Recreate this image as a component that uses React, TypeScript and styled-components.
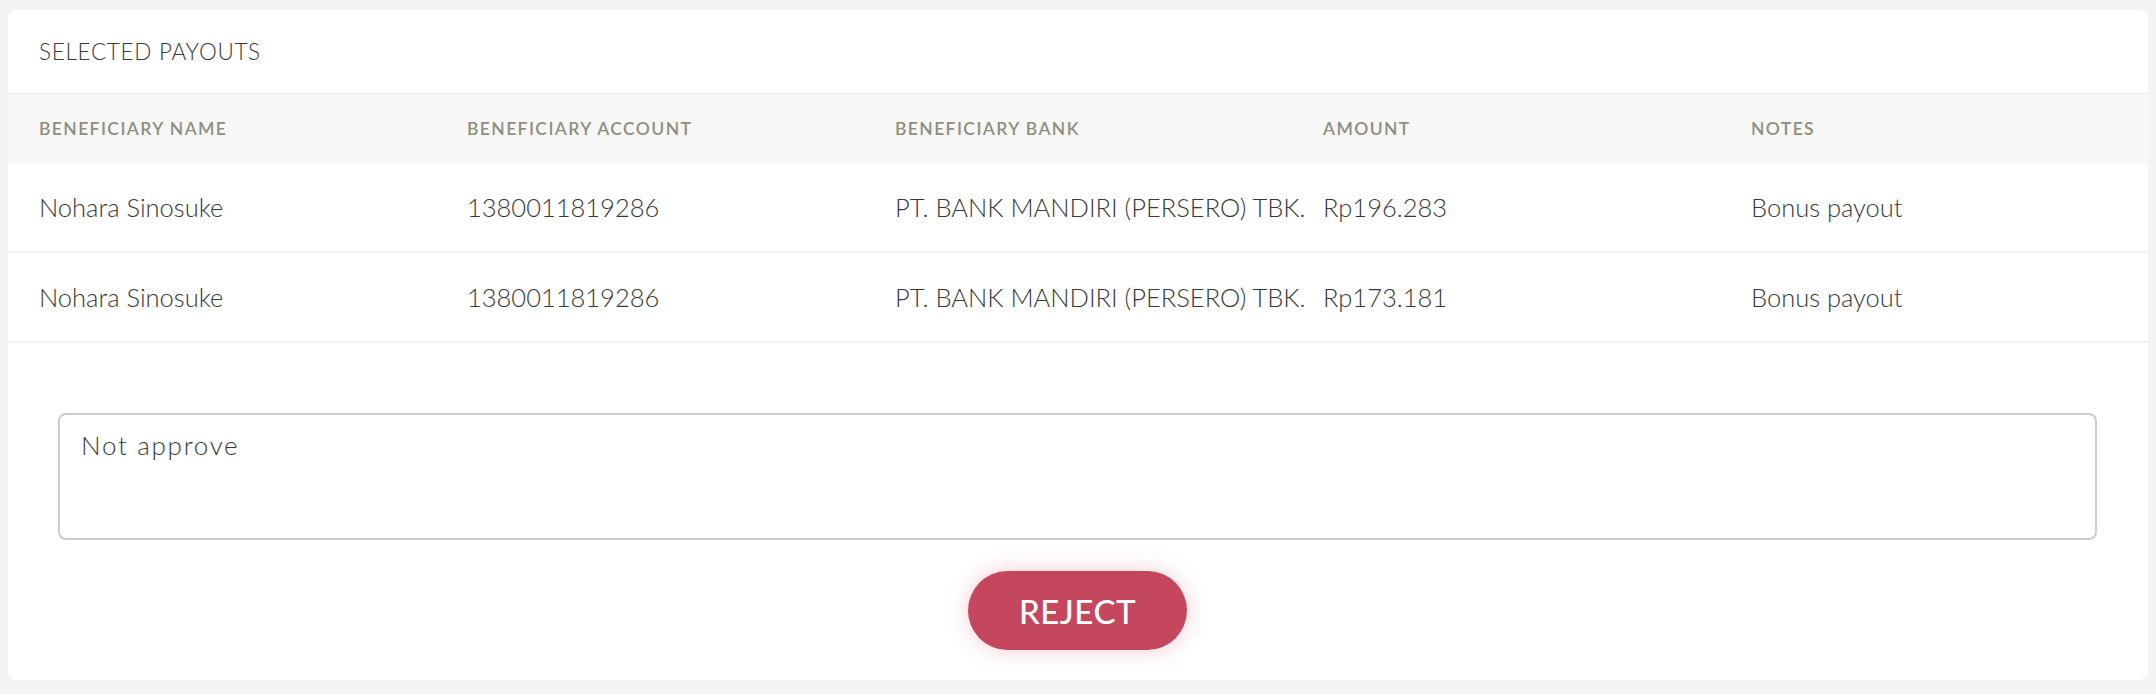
import React from "react";
import styled, { createGlobalStyle } from "styled-components";

const GlobalStyle = createGlobalStyle`
  html, body {
    margin: 0;
    padding: 0;
  }
  body {
    margin: 8px;
    background: #f3f3f1;
    font-family: Lato, "Open Sans", "Liberation Sans", sans-serif;
    color: #444;
  }
`;

const Card = styled.section`
  margin-top: 2px;
  background: #ffffff;
  border-radius: 8px;
  overflow: hidden;
`;

const CardTitle = styled.h2`
  margin: 0;
  height: 84px;
  box-sizing: border-box;
  padding-left: 31px;
  display: flex;
  align-items: center;
  font-size: 22.5px;
  font-weight: 300;
  letter-spacing: 0.7px;
  color: #3a3a3a;
  border-bottom: 1px solid #ececec;
`;

const Row = styled.div<{ $head?: boolean }>`
  display: grid;
  grid-template-columns: repeat(5, minmax(0, 1fr));
  align-items: center;
  box-sizing: border-box;
  height: ${(p) => (p.$head ? "69px" : "90px")};
  background: ${(p) => (p.$head ? "#f7f7f7" : "#ffffff")};
  border-bottom: ${(p) => (p.$head ? "none" : "2px solid #f0f0f0")};
`;

const HeadCell = styled.div`
  padding-left: 31px;
  font-size: 17.5px;
  font-weight: 600;
  letter-spacing: 1.4px;
  color: #8f8f80;
  white-space: nowrap;
`;

const Cell = styled.div`
  padding-left: 31px;
  font-size: 25.5px;
  font-weight: 300;
  color: #383838;
  white-space: nowrap;
`;

const FormArea = styled.div`
  padding: 70px 51px 30px 50px;
  display: flex;
  flex-direction: column;
  align-items: stretch;
  gap: 31px;
`;

const Note = styled.textarea`
  display: block;
  width: 100%;
  height: 127px;
  box-sizing: border-box;
  border: 2px solid #cccccc;
  border-radius: 8px;
  padding: 14px 21px;
  font-family: Lato, "Open Sans", "Liberation Sans", sans-serif;
  font-size: 26px;
  font-weight: 300;
  letter-spacing: 1.7px;
  color: #383838;
  resize: none;
  outline: none;
`;

const ButtonRow = styled.div`
  display: flex;
  justify-content: center;
`;

const RejectButton = styled.button`
  width: 219px;
  height: 79px;
  border: none;
  border-radius: 40px;
  background: #c4475e;
  color: #ffffff;
  font-family: Lato, "Open Sans", "Liberation Sans", sans-serif;
  font-size: 33px;
  font-weight: 500;
  letter-spacing: 0.5px;
  box-shadow: 0 0 22px rgba(196, 71, 94, 0.28);
  cursor: pointer;
`;

const headers = [
  "BENEFICIARY NAME",
  "BENEFICIARY ACCOUNT",
  "BENEFICIARY BANK",
  "AMOUNT",
  "NOTES",
];

const payouts = [
  {
    name: "Nohara Sinosuke",
    account: "1380011819286",
    bank: "PT. BANK MANDIRI (PERSERO) TBK.",
    amount: "Rp196.283",
    notes: "Bonus payout",
  },
  {
    name: "Nohara Sinosuke",
    account: "1380011819286",
    bank: "PT. BANK MANDIRI (PERSERO) TBK.",
    amount: "Rp173.181",
    notes: "Bonus payout",
  },
];

export default function App() {
  return (
    <>
      <GlobalStyle />
      <Card>
        <CardTitle>SELECTED PAYOUTS</CardTitle>
        <Row $head>
          {headers.map((h) => (
            <HeadCell key={h}>{h}</HeadCell>
          ))}
        </Row>
        {payouts.map((p, i) => (
          <Row key={i}>
            <Cell>{p.name}</Cell>
            <Cell>{p.account}</Cell>
            <Cell>{p.bank}</Cell>
            <Cell>{p.amount}</Cell>
            <Cell>{p.notes}</Cell>
          </Row>
        ))}
        <FormArea>
          <Note defaultValue="Not approve" />
          <ButtonRow>
            <RejectButton>REJECT</RejectButton>
          </ButtonRow>
        </FormArea>
      </Card>
    </>
  );
}
